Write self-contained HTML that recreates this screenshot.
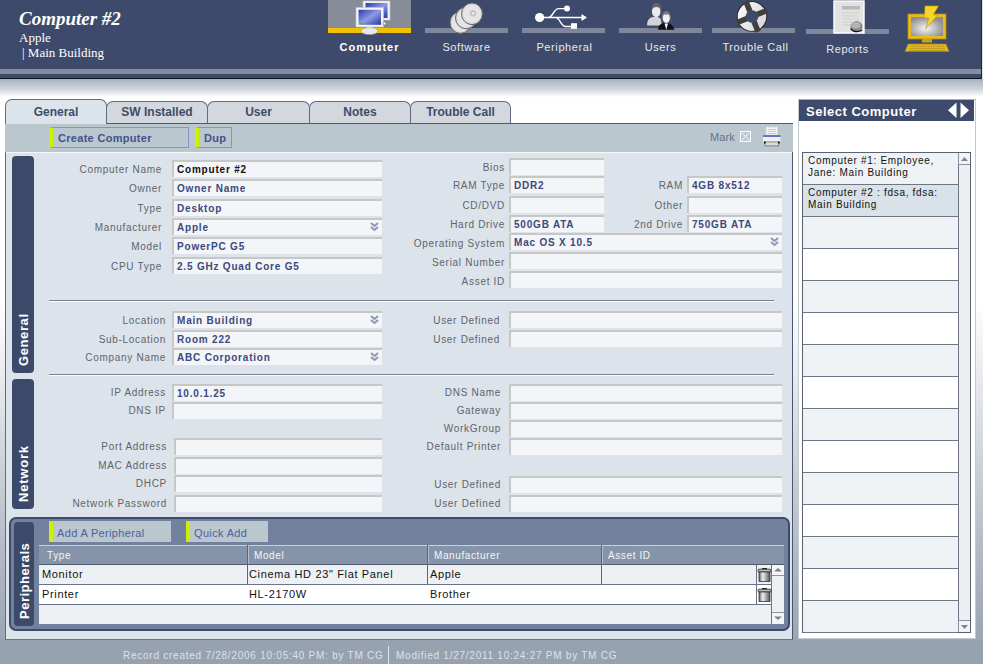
<!DOCTYPE html>
<html><head><meta charset="utf-8">
<style>
*{margin:0;padding:0;box-sizing:border-box}
html,body{width:983px;height:664px;overflow:hidden;background:linear-gradient(#fff 0,#fff 300px,#b0b8c3 560px,#9ba5b3 640px);font-family:"Liberation Sans",sans-serif}
.a{position:absolute}
#hdr{left:0;top:0;width:982px;height:79px;background:#3e4a6b;border-right:1px solid #1c2438}
#stripe{left:0;top:69px;width:981px;height:5px;background:#858da0}
#blk{left:0;top:78px;width:982px;height:1px;background:#0e1424}
#grad{left:0;top:79px;width:983px;height:19px;background:linear-gradient(#a7b1c1,#ccd3db 50%,#fff 95%)}
.ttl{color:#fff;font-family:"Liberation Serif",serif;white-space:nowrap}
.nbar{top:28px;width:83px;height:5px;background:#7f889b}
.ntxt{top:41px;width:83px;text-align:center;color:#e6e9ef;font-size:11px;line-height:13px;letter-spacing:.6px;white-space:nowrap}
/* tabs */
.tab{top:101px;height:23px;background:#d3d8de;border:1px solid #5d6b86;border-bottom:none;border-radius:7px 7px 0 0;color:#3e4c68;font-weight:bold;font-size:12px;text-align:center;line-height:20px}
#main{left:5px;top:123px;width:788px;height:517px;background:#dce3ea;border-left:1px solid #5d6b86;border-right:1px solid #4a5670;border-bottom:1px solid #6d7583}
#tool{left:5px;top:123px;width:788px;height:29px;background:#bac7ce;border-top:1px solid #4b5a7a}
#tline{left:6px;top:152px;width:786px;height:1px;background:#f4f6f8}
.btn{height:21px;background:#bac7ce;border:1px solid #8593cc;border-left:4px solid #ccf000;color:#44528c;font-weight:bold;font-size:11px;line-height:21px;padding-left:5px;letter-spacing:.3px;white-space:nowrap}
.vtab{background:#3c4a6a;border-radius:4px}
.vt{color:#fff;font-weight:bold;font-size:13px;white-space:nowrap;transform-origin:0 0;transform:rotate(-90deg)}
.lbl{color:#5f646c;font-size:10px;letter-spacing:.7px;text-align:right;white-space:nowrap}
.inp{height:17px;background:#f3f5f8;border-top:2px solid #c6c8c6;border-left:2px solid #c6c8c6;color:#3b4a7c;font-weight:bold;font-size:10px;letter-spacing:.8px;line-height:15px;padding-left:3px;white-space:nowrap;overflow:hidden}
.sep{left:49px;width:725px;height:2px;border-top:1px solid #7a818b;border-bottom:1px solid #fbfcfd}
.dd{position:absolute;right:3px;top:2px;width:9px;height:10px}
/* right panel */
#rp{left:798px;top:99px;width:178px;height:540px;background:#fff;border:1px solid #c4c8cf;border-top:1px solid #a9afb9}
#rph{left:799px;top:100px;width:175px;height:21px;background:#3e4a6b}
#list{left:802px;top:152px;width:169px;height:481px;border:1px solid #596273;background:#fff}
.row{left:803px;width:155px;height:32px;border-bottom:1px solid #6e7686}
.ltxt{color:#111;font-size:10px;letter-spacing:.7px;line-height:12px;white-space:nowrap}
#foot{left:0;top:640px;width:983px;height:24px;background:#97a2b1}
.ft{top:650px;color:#dde1e8;font-size:10px;letter-spacing:.75px;white-space:nowrap}
.pbtn{height:21px;background:#bac7ce;border-left:4px solid #ccf000;color:#4f5e9c;font-size:11px;letter-spacing:.35px;line-height:24px;padding-left:4px;white-space:nowrap}
.th{color:#f4f6f9;font-size:10px;letter-spacing:.6px;line-height:12px;white-space:nowrap}
.td{color:#111;font-size:11px;letter-spacing:.65px;line-height:13px;white-space:nowrap}
</style></head><body>
<div class="a" id="hdr"></div>
<div class="a" id="stripe"></div>
<div class="a" id="blk"></div>
<div class="a" id="grad"></div>
<div class="a" style="left:982px;top:0;width:1px;height:78px;background:#dfe3e8"></div>

<div class="a ttl" style="left:19px;top:8px;font-size:19px;font-weight:bold;font-style:italic">Computer #2</div>
<div class="a ttl" style="left:19px;top:30px;font-size:13px">Apple</div>
<div class="a ttl" style="left:22px;top:45px;font-size:13px">| Main Building</div>

<!-- nav -->
<div class="a" style="left:328px;top:0;width:83px;height:28px;background:#878d98"></div>
<div class="a" style="left:328px;top:28px;width:83px;height:5px;background:#f4c100"></div>
<div class="a nbar" style="left:425px"></div>
<div class="a nbar" style="left:522px"></div>
<div class="a nbar" style="left:619px"></div>
<div class="a nbar" style="left:712px"></div>
<div class="a nbar" style="left:806px;top:29px"></div>
<div class="a ntxt" style="left:328px;font-weight:bold;color:#fff;letter-spacing:1px">Computer</div>
<div class="a ntxt" style="left:425px">Software</div>
<div class="a ntxt" style="left:523px">Peripheral</div>
<div class="a ntxt" style="left:619px">Users</div>
<div class="a ntxt" style="left:714px">Trouble Call</div>
<div class="a ntxt" style="left:806px;top:43px">Reports</div>

<!-- main panel -->
<div class="a" id="main"></div>
<div class="a tab" style="left:106px;width:102px">SW Installed</div>
<div class="a tab" style="left:207px;width:103px">User</div>
<div class="a tab" style="left:309px;width:102px">Notes</div>
<div class="a tab" style="left:410px;width:101px">Trouble Call</div>
<div class="a" id="tool"></div>
<div class="a tab" style="left:5px;top:99px;width:102px;height:25px;background:#dde3ea;line-height:24px;z-index:2">General</div>
<div class="a" id="tline"></div>
<div class="a btn" style="left:49px;top:127px;width:140px">Create Computer</div>
<div class="a btn" style="left:195px;top:127px;width:37px">Dup</div>
<div class="a" style="left:710px;top:131px;color:#67718f;font-size:11px;letter-spacing:.1px">Mark</div>

<!-- right panel -->
<div class="a" id="rp"></div>
<div class="a" id="rph"></div>
<div class="a" style="left:806px;top:104px;color:#fff;font-weight:bold;font-size:13px;letter-spacing:.5px;white-space:nowrap">Select Computer</div>
<div class="a" id="list"></div>

<div class="a vtab" style="left:12px;top:156px;width:22px;height:217px"></div>
<div class="a vt" style="left:17px;top:366px;letter-spacing:0.6px;line-height:13px">General</div>
<div class="a vtab" style="left:12px;top:379px;width:22px;height:130px"></div>
<div class="a vt" style="left:17px;top:502px;letter-spacing:0.8px;line-height:13px">Network</div>
<div class="a sep" style="top:300px"></div>
<div class="a sep" style="top:374px"></div>
<div class="a lbl" style="left:12px;top:164px;width:150px;line-height:12px">Computer Name</div>
<div class="a inp" style="left:172px;top:160px;width:210px;height:17px;color:#111">Computer #2</div>
<div class="a lbl" style="left:12px;top:183px;width:150px;line-height:12px">Owner</div>
<div class="a inp" style="left:172px;top:179px;width:210px;height:17px">Owner Name</div>
<div class="a lbl" style="left:12px;top:203px;width:150px;line-height:12px">Type</div>
<div class="a inp" style="left:172px;top:199px;width:210px;height:17px">Desktop</div>
<div class="a lbl" style="left:12px;top:222px;width:150px;line-height:12px">Manufacturer</div>
<div class="a inp" style="left:172px;top:218px;width:210px;height:17px">Apple<svg class="dd" viewBox="0 0 9 10"><path d="M1 1l3.5 3 3.5-3M1 5l3.5 3 3.5-3" stroke="#8d96b4" stroke-width="2" fill="none"/></svg></div>
<div class="a lbl" style="left:12px;top:241px;width:150px;line-height:12px">Model</div>
<div class="a inp" style="left:172px;top:237px;width:210px;height:17px">PowerPC G5</div>
<div class="a lbl" style="left:12px;top:261px;width:150px;line-height:12px">CPU Type</div>
<div class="a inp" style="left:172px;top:257px;width:210px;height:17px">2.5 GHz Quad Core G5</div>
<div class="a lbl" style="left:355px;top:162px;width:150px;line-height:12px">Bios</div>
<div class="a inp" style="left:509px;top:158px;width:95px;height:17px"></div>
<div class="a lbl" style="left:355px;top:180px;width:150px;line-height:12px">RAM Type</div>
<div class="a inp" style="left:509px;top:176px;width:95px;height:17px">DDR2</div>
<div class="a lbl" style="left:355px;top:200px;width:150px;line-height:12px">CD/DVD</div>
<div class="a inp" style="left:509px;top:196px;width:95px;height:17px"></div>
<div class="a lbl" style="left:355px;top:219px;width:150px;line-height:12px">Hard Drive</div>
<div class="a inp" style="left:509px;top:215px;width:95px;height:17px">500GB ATA</div>
<div class="a lbl" style="left:355px;top:238px;width:150px;line-height:12px">Operating System</div>
<div class="a inp" style="left:509px;top:233px;width:273px;height:17px">Mac OS X 10.5<svg class="dd" viewBox="0 0 9 10"><path d="M1 1l3.5 3 3.5-3M1 5l3.5 3 3.5-3" stroke="#8d96b4" stroke-width="2" fill="none"/></svg></div>
<div class="a lbl" style="left:355px;top:257px;width:150px;line-height:12px">Serial Number</div>
<div class="a inp" style="left:509px;top:252px;width:273px;height:17px"></div>
<div class="a lbl" style="left:355px;top:276px;width:150px;line-height:12px">Asset ID</div>
<div class="a inp" style="left:509px;top:271px;width:273px;height:17px"></div>
<div class="a lbl" style="left:533px;top:180px;width:150px;line-height:12px">RAM</div>
<div class="a inp" style="left:687px;top:176px;width:95px;height:17px">4GB 8x512</div>
<div class="a lbl" style="left:533px;top:200px;width:150px;line-height:12px">Other</div>
<div class="a inp" style="left:687px;top:196px;width:95px;height:17px"></div>
<div class="a lbl" style="left:533px;top:219px;width:150px;line-height:12px">2nd Drive</div>
<div class="a inp" style="left:687px;top:215px;width:95px;height:17px">750GB ATA</div>
<div class="a lbl" style="left:16px;top:315px;width:150px;line-height:12px">Location</div>
<div class="a inp" style="left:172px;top:311px;width:210px;height:17px">Main Building<svg class="dd" viewBox="0 0 9 10"><path d="M1 1l3.5 3 3.5-3M1 5l3.5 3 3.5-3" stroke="#8d96b4" stroke-width="2" fill="none"/></svg></div>
<div class="a lbl" style="left:16px;top:334px;width:150px;line-height:12px">Sub-Location</div>
<div class="a inp" style="left:172px;top:330px;width:210px;height:17px">Room 222</div>
<div class="a lbl" style="left:16px;top:352px;width:150px;line-height:12px">Company Name</div>
<div class="a inp" style="left:172px;top:348px;width:210px;height:17px">ABC Corporation<svg class="dd" viewBox="0 0 9 10"><path d="M1 1l3.5 3 3.5-3M1 5l3.5 3 3.5-3" stroke="#8d96b4" stroke-width="2" fill="none"/></svg></div>
<div class="a lbl" style="left:350px;top:315px;width:150px;line-height:12px">User Defined</div>
<div class="a inp" style="left:509px;top:311px;width:273px;height:17px"></div>
<div class="a lbl" style="left:350px;top:334px;width:150px;line-height:12px">User Defined</div>
<div class="a inp" style="left:509px;top:330px;width:273px;height:17px"></div>
<div class="a lbl" style="left:16px;top:387px;width:150px;line-height:12px">IP Address</div>
<div class="a inp" style="left:172px;top:384px;width:210px;height:17px">10.0.1.25</div>
<div class="a lbl" style="left:16px;top:405px;width:150px;line-height:12px">DNS IP</div>
<div class="a inp" style="left:172px;top:402px;width:210px;height:17px"></div>
<div class="a lbl" style="left:17px;top:441px;width:150px;line-height:12px">Port Address</div>
<div class="a inp" style="left:174px;top:438px;width:208px;height:17px"></div>
<div class="a lbl" style="left:17px;top:460px;width:150px;line-height:12px">MAC Address</div>
<div class="a inp" style="left:174px;top:457px;width:208px;height:17px"></div>
<div class="a lbl" style="left:17px;top:478px;width:150px;line-height:12px">DHCP</div>
<div class="a inp" style="left:174px;top:475px;width:208px;height:17px"></div>
<div class="a lbl" style="left:17px;top:498px;width:150px;line-height:12px">Network Password</div>
<div class="a inp" style="left:174px;top:495px;width:208px;height:17px"></div>
<div class="a lbl" style="left:351px;top:387px;width:150px;line-height:12px">DNS Name</div>
<div class="a inp" style="left:509px;top:384px;width:273px;height:17px"></div>
<div class="a lbl" style="left:351px;top:405px;width:150px;line-height:12px">Gateway</div>
<div class="a inp" style="left:509px;top:402px;width:273px;height:17px"></div>
<div class="a lbl" style="left:351px;top:423px;width:150px;line-height:12px">WorkGroup</div>
<div class="a inp" style="left:509px;top:420px;width:273px;height:17px"></div>
<div class="a lbl" style="left:351px;top:441px;width:150px;line-height:12px">Default Printer</div>
<div class="a inp" style="left:509px;top:438px;width:273px;height:17px"></div>
<div class="a lbl" style="left:351px;top:479px;width:150px;line-height:12px">User Defined</div>
<div class="a inp" style="left:509px;top:476px;width:273px;height:17px"></div>
<div class="a lbl" style="left:351px;top:498px;width:150px;line-height:12px">User Defined</div>
<div class="a inp" style="left:509px;top:495px;width:273px;height:17px"></div>
<div class="a" style="left:9px;top:517px;width:781px;height:114px;background:#71819e;border:2px solid #3e4a6b;border-radius:7px"></div>
<div class="a vtab" style="left:14px;top:522px;width:20px;height:104px"></div>
<div class="a vt" style="left:18px;top:619px;letter-spacing:0.5px;line-height:13px">Peripherals</div>
<div class="a pbtn" style="left:49px;top:521px;width:122px">Add A Peripheral</div>
<div class="a pbtn" style="left:186px;top:521px;width:82px">Quick Add</div>
<div class="a" style="left:39px;top:545px;width:745px;height:79px;background:#eef1f4"></div>
<div class="a" style="left:39px;top:545px;width:745px;height:20px;background:#8594a8;border-top:1px solid #c9d0da;border-bottom:1px solid #4f5a6e"></div>
<div class="a" style="left:247px;top:545px;width:1px;height:59px;background:#5a6579"></div>
<div class="a" style="left:248px;top:545px;width:1px;height:19px;background:#b5bdca"></div>
<div class="a" style="left:427px;top:545px;width:1px;height:59px;background:#5a6579"></div>
<div class="a" style="left:428px;top:545px;width:1px;height:19px;background:#b5bdca"></div>
<div class="a" style="left:601px;top:545px;width:1px;height:59px;background:#5a6579"></div>
<div class="a" style="left:602px;top:545px;width:1px;height:19px;background:#b5bdca"></div>
<div class="a th" style="left:47px;top:550px">Type</div>
<div class="a th" style="left:254px;top:550px">Model</div>
<div class="a th" style="left:434px;top:550px">Manufacturer</div>
<div class="a th" style="left:608px;top:550px">Asset ID</div>
<div class="a" style="left:39px;top:585px;width:732px;height:19px;background:#fff"></div>
<div class="a" style="left:39px;top:584px;width:732px;height:1px;background:#6a7488"></div>
<div class="a" style="left:39px;top:604px;width:732px;height:1px;background:#6a7488"></div>
<div class="a td" style="left:42px;top:568px">Monitor</div>
<div class="a td" style="left:249px;top:568px">Cinema HD 23" Flat Panel</div>
<div class="a td" style="left:430px;top:568px">Apple</div>
<div class="a td" style="left:42px;top:588px">Printer</div>
<div class="a td" style="left:249px;top:588px">HL-2170W</div>
<div class="a td" style="left:430px;top:588px">Brother</div>
<div class="a" style="left:756px;top:565px;width:1px;height:39px;background:#6a7488"></div>
<div class="a" style="left:771px;top:565px;width:13px;height:59px;background:#eef0f3;border-left:1px solid #6a7488"></div>
<div class="a" style="left:771px;top:565px;width:13px;height:11px;border-left:1px solid #6a7488;border-bottom:1px solid #8a92a0;background:#f4f5f7"></div>
<div class="a" style="left:771px;top:612px;width:13px;height:12px;border-left:1px solid #6a7488;border-top:1px solid #8a92a0;background:#f4f5f7"></div>
<svg class="a" style="left:774px;top:568px" width="8" height="4"><path d="M0 3.5L4 0 8 3.5z" fill="#7b8494"/></svg>
<svg class="a" style="left:774px;top:616px" width="8" height="4"><path d="M0 .5L4 4 8 .5z" fill="#7b8494"/></svg>
<div class="a" style="left:803px;top:153px;width:155px;height:32px;background:#eff2f5;border-bottom:1px solid #6e7686"></div>
<div class="a" style="left:803px;top:185px;width:155px;height:32px;background:#dae2e9;border-bottom:1px solid #6e7686"></div>
<div class="a" style="left:803px;top:217px;width:155px;height:32px;background:#eff2f5;border-bottom:1px solid #6e7686"></div>
<div class="a" style="left:803px;top:249px;width:155px;height:32px;background:#ffffff;border-bottom:1px solid #6e7686"></div>
<div class="a" style="left:803px;top:281px;width:155px;height:32px;background:#eff2f5;border-bottom:1px solid #6e7686"></div>
<div class="a" style="left:803px;top:313px;width:155px;height:32px;background:#ffffff;border-bottom:1px solid #6e7686"></div>
<div class="a" style="left:803px;top:345px;width:155px;height:32px;background:#eff2f5;border-bottom:1px solid #6e7686"></div>
<div class="a" style="left:803px;top:377px;width:155px;height:32px;background:#ffffff;border-bottom:1px solid #6e7686"></div>
<div class="a" style="left:803px;top:409px;width:155px;height:32px;background:#eff2f5;border-bottom:1px solid #6e7686"></div>
<div class="a" style="left:803px;top:441px;width:155px;height:32px;background:#ffffff;border-bottom:1px solid #6e7686"></div>
<div class="a" style="left:803px;top:473px;width:155px;height:32px;background:#eff2f5;border-bottom:1px solid #6e7686"></div>
<div class="a" style="left:803px;top:505px;width:155px;height:32px;background:#ffffff;border-bottom:1px solid #6e7686"></div>
<div class="a" style="left:803px;top:537px;width:155px;height:32px;background:#eff2f5;border-bottom:1px solid #6e7686"></div>
<div class="a" style="left:803px;top:569px;width:155px;height:32px;background:#ffffff;border-bottom:1px solid #6e7686"></div>
<div class="a" style="left:803px;top:601px;width:155px;height:32px;background:#eff2f5;border-bottom:1px solid #6e7686"></div>
<div class="a ltxt" style="left:808px;top:155px">Computer #1: Employee,<br>Jane: Main Building</div>
<div class="a ltxt" style="left:808px;top:187px">Computer #2 : fdsa, fdsa:<br>Main Building</div>
<div class="a" style="left:958px;top:153px;width:12px;height:479px;background:#eceef2;border-left:1px solid #6e7686"></div>
<div class="a" style="left:958px;top:153px;width:12px;height:12px;border:1px solid #8a92a0;border-top:none;border-right:none;background:#f2f4f6"></div>
<div class="a" style="left:958px;top:620px;width:12px;height:12px;border:1px solid #8a92a0;border-bottom:none;border-right:none;background:#f2f4f6"></div>
<svg class="a" style="left:960px;top:156px" width="9" height="6"><path d="M1 5L4.5 1 8 5z" fill="#7b8494"/></svg>
<svg class="a" style="left:960px;top:624px" width="9" height="6"><path d="M1 1L4.5 5 8 1z" fill="#7b8494"/></svg>
<svg class="a" style="left:350px;top:0" width="45" height="36" viewBox="350 0 45 36">
<defs><linearGradient id="scr" x1="0" y1="0" x2="1" y2="1"><stop offset="0" stop-color="#2a3aa8"/><stop offset=".5" stop-color="#8d9ae6"/><stop offset="1" stop-color="#2636a0"/></linearGradient></defs>
<rect x="363" y="1" width="27" height="19" fill="#f2f2f2" stroke="#c8c8c8" stroke-width=".6"/>
<rect x="365.5" y="3" width="22" height="15" fill="url(#scr)"/>
<ellipse cx="369.5" cy="31" rx="8.5" ry="3.6" fill="#e8e8e8" stroke="#9a9a9a" stroke-width=".6"/>
<rect x="367" y="26" width="5" height="3" fill="#d8d8d8"/>
<rect x="356" y="7.5" width="27.5" height="19.5" fill="#f4f4f4" stroke="#c0c0c0" stroke-width=".6"/>
<rect x="358.5" y="9.8" width="22.5" height="15" fill="url(#scr)"/>
<path d="M359.5 21.5l1.5 2 3-1.2-.3 2.2h-3.5z" fill="#3cc040"/>
<circle cx="384.5" cy="23.5" r="1.6" fill="#f0f0f0" stroke="#555" stroke-width=".5"/>
</svg>
<svg class="a" style="left:445px;top:0" width="45" height="36" viewBox="445 0 45 36"><ellipse cx="460.5" cy="22.5" rx="10.5" ry="10.8" fill="#dcdcdc" stroke="#5a5a5a" stroke-width=".9"/><ellipse cx="460.5" cy="22.5" rx="8.5" ry="8.8" fill="#e6e6e6"/><circle cx="461.5" cy="22.0" r="3.2" fill="#c4c4c4"/><circle cx="461.5" cy="22.0" r="1.4" fill="#eee"/><ellipse cx="466" cy="18" rx="10.5" ry="10.8" fill="#dcdcdc" stroke="#5a5a5a" stroke-width=".9"/><ellipse cx="466" cy="18" rx="8.5" ry="8.8" fill="#e6e6e6"/><circle cx="467" cy="17.5" r="3.2" fill="#c4c4c4"/><circle cx="467" cy="17.5" r="1.4" fill="#eee"/><ellipse cx="472" cy="13.8" rx="10.5" ry="10.8" fill="#dcdcdc" stroke="#5a5a5a" stroke-width=".9"/><ellipse cx="472" cy="13.8" rx="8.5" ry="8.8" fill="#e6e6e6"/><circle cx="473" cy="13.3" r="3.2" fill="#c4c4c4"/><circle cx="473" cy="13.3" r="1.4" fill="#eee"/></svg>
<svg class="a" style="left:530px;top:0" width="65" height="36" viewBox="530 0 65 36">
<g fill="#fff" stroke="#fff">
<circle cx="539.6" cy="17.5" r="4.6" stroke="none"/>
<path d="M540 17.5H583" stroke-width="1.4" fill="none"/>
<path d="M587 17.5l-5.5-3.4v6.8z" stroke="none"/>
<path d="M548.5 17.5c4 0 5.5-8.9 10-8.9H566" stroke-width="1.4" fill="none"/>
<circle cx="567" cy="8.6" r="3" stroke="none"/>
<path d="M556 17.5c3.5 0 5 9 9.5 9H571" stroke-width="1.4" fill="none"/>
<rect x="571" y="23.2" width="6" height="5.6" stroke="none"/>
</g></svg>
<svg class="a" style="left:640px;top:0" width="45" height="36" viewBox="640 0 45 36">
<path d="M647 25.5c0-6 3-8.5 7-8.5h3c3 0 4.5 2 4.5 8.5z" fill="#d4d4d4"/>
<ellipse cx="656.2" cy="11.5" rx="4.3" ry="5.8" fill="#eaeaea"/>
<path d="M651.5 10c0-4.5 2.5-7 5-7s5 2.5 5 7c-1-2-3-3-5-3s-4 1-5 3z" fill="#666"/>
<path d="M658 29.8c.5-4 2-6 5-6.5h5c3 .5 5 2.5 6.5 6.5z" fill="#111"/>
<path d="M664.5 23.5l1.8 6.3 1.8-6.3z" fill="#f0f0f0"/>
<ellipse cx="666.3" cy="18" rx="3.6" ry="5" fill="#f2f2f2"/>
<path d="M661.5 22c-.5-7 1.5-11 4.8-11s5.3 4 4.8 11c-.5-4-1.5-7-2-8-1.5 1-4 1-5.5 0-.5 1-1.6 4-2.1 8z" fill="#7a7a7a"/>
</svg>
<svg class="a" style="left:735px;top:0" width="34" height="34" viewBox="735 0 34 34">
<defs><mask id="lbm"><rect x="735" y="0" width="34" height="34" fill="#fff"/><circle cx="752" cy="16.5" r="6.3" fill="#000"/></mask>
<linearGradient id="lbg" x1="0" y1="0" x2="1" y2="1"><stop offset="0" stop-color="#fff"/><stop offset="1" stop-color="#d0d0d0"/></linearGradient></defs>
<g mask="url(#lbm)" transform="rotate(-22 752 16.5)">
<circle cx="752" cy="16.5" r="14.8" fill="url(#lbg)" stroke="#1e1e1e" stroke-width=".9"/>
<path d="M749.2 0h5.6v11h-5.6zM768 13.7v5.6h-11v-5.6zM754.8 33h-5.6v-11h5.6zM736 19.3v-5.6h11v5.6z" fill="#404040"/>
</g></svg>
<svg class="a" style="left:833px;top:0" width="33" height="34" viewBox="833 0 33 34">
<rect x="834" y="1" width="30" height="32" fill="#e2e2e2" stroke="#fff" stroke-width="1.4"/>
<rect x="842" y="6" width="18" height="3.5" fill="#b8b8b8"/>
<path d="M842 13h17M842 16h16M842 19h17M842 22h10M842 25h9" stroke="#cfcfcf" stroke-width="1"/>
<ellipse cx="856.5" cy="26.6" rx="6" ry="5.5" fill="#8a8a8a"/>
<ellipse cx="855.8" cy="25.2" rx="4.5" ry="3.2" fill="#b4b4b4"/>
<path d="M850.6 28.5c1.5 3 7 4.5 11.5 1.5" stroke="#111" stroke-width="1.4" fill="none"/>
</svg>
<svg class="a" style="left:900px;top:0" width="55" height="56" viewBox="900 0 55 56">
<defs><radialGradient id="ysc" cx=".45" cy=".6" r=".6"><stop offset="0" stop-color="#f6f6f6"/><stop offset="1" stop-color="#8e8e8e"/></radialGradient></defs>
<rect x="908" y="14" width="38" height="25" fill="#e5bd22" stroke="#b38f10" stroke-width=".8"/>
<rect x="911" y="17" width="32" height="19" fill="url(#ysc)"/>
<rect x="922" y="39" width="10" height="3.5" fill="#c9a01a"/>
<path d="M908 44h38l3 7.5h-44z" fill="#e2ba2a" stroke="#a88410" stroke-width=".7"/>
<path d="M909.5 46.3h35M909 48.5h36M908.3 50.5h37.5" stroke="#b89015" stroke-width=".7"/><path d="M914 44v7.5M919 44v7.5M924 44v7.5M929 44v7.5M934 44v7.5M939 44v7.5M944 44v7.5" stroke="#c9a020" stroke-width=".6"/>
<path d="M925 6h13.5l-5.5 9h4.5l-12 14 3.5-11h-4.5z" fill="#f7d628" stroke="#c89a10" stroke-width=".6"/>
</svg>
<svg class="a" style="left:740px;top:131px" width="11" height="11"><rect x=".5" y=".5" width="10" height="10" fill="none" stroke="#fff"/><path d="M2 2l7 7M9 2l-7 7" stroke="#fff" stroke-width=".9"/></svg>
<svg class="a" style="left:762px;top:125px" width="20" height="23" viewBox="762 125 20 23">
<path d="M766 127.5l1.5-1 1.5 1 1.5-1 1.5 1 1.5-1 1.5 1 1.5-1 1 1V135h-11.5z" fill="#f6f6f6" stroke="#c8c8c8" stroke-width=".5"/>
<path d="M767.5 129.5h8.5M767.5 131.5h8.5M767.5 133.5h8.5" stroke="#bdbdbd" stroke-width=".8"/>
<rect x="763" y="135" width="17.5" height="2" fill="#5a7cc0"/>
<rect x="763" y="137" width="17.5" height="4.5" fill="#f0f0f0"/>
<path d="M764 141.5h15.5l-.5 5h-14.5z" fill="#8c8c8c"/>
<rect x="765.5" y="142.5" width="12.5" height="2.8" fill="#dcdcdc"/>
<rect x="764" y="141.5" width="1.6" height="2" fill="#111"/><rect x="778" y="141.5" width="1.6" height="2" fill="#111"/>
</svg>
<svg class="a" style="left:946px;top:102px" width="25" height="17" viewBox="946 102 25 17"><path d="M956.5 102.5v15.5l-8.5-7.75z" fill="#fff"/><path d="M960.5 102.5v15.5l8.5-7.75z" fill="#fff"/></svg>
<svg class="a" style="left:757px;top:568px" width="15" height="15" viewBox="0 0 15 15">
<defs><linearGradient id="tg568" x1="0" x2="1"><stop offset="0" stop-color="#666"/><stop offset=".35" stop-color="#eee"/><stop offset="1" stop-color="#555"/></linearGradient></defs>
<rect x="5" y="0" width="5" height="1.5" fill="#222"/>
<rect x="1" y="1.2" width="13" height="2.8" rx="1" fill="#bbb" stroke="#222" stroke-width=".8"/>
<rect x="2" y="4" width="11" height="9.6" fill="url(#tg568)" stroke="#222" stroke-width=".7"/>
</svg>
<svg class="a" style="left:757px;top:588px" width="15" height="15" viewBox="0 0 15 15">
<defs><linearGradient id="tg588" x1="0" x2="1"><stop offset="0" stop-color="#666"/><stop offset=".35" stop-color="#eee"/><stop offset="1" stop-color="#555"/></linearGradient></defs>
<rect x="5" y="0" width="5" height="1.5" fill="#222"/>
<rect x="1" y="1.2" width="13" height="2.8" rx="1" fill="#bbb" stroke="#222" stroke-width=".8"/>
<rect x="2" y="4" width="11" height="9.6" fill="url(#tg588)" stroke="#222" stroke-width=".7"/>
</svg>
<!-- footer -->
<div class="a" id="foot"></div>
<div class="a ft" style="left:123px">Record created 7/28/2006 10:05:40 PM: by TM CG</div>
<div class="a" style="left:388px;top:646px;width:1px;height:18px;background:#e2e6ec"></div>
<div class="a ft" style="left:396px">Modified 1/27/2011 10:24:27 PM by TM CG</div>
</body></html>
